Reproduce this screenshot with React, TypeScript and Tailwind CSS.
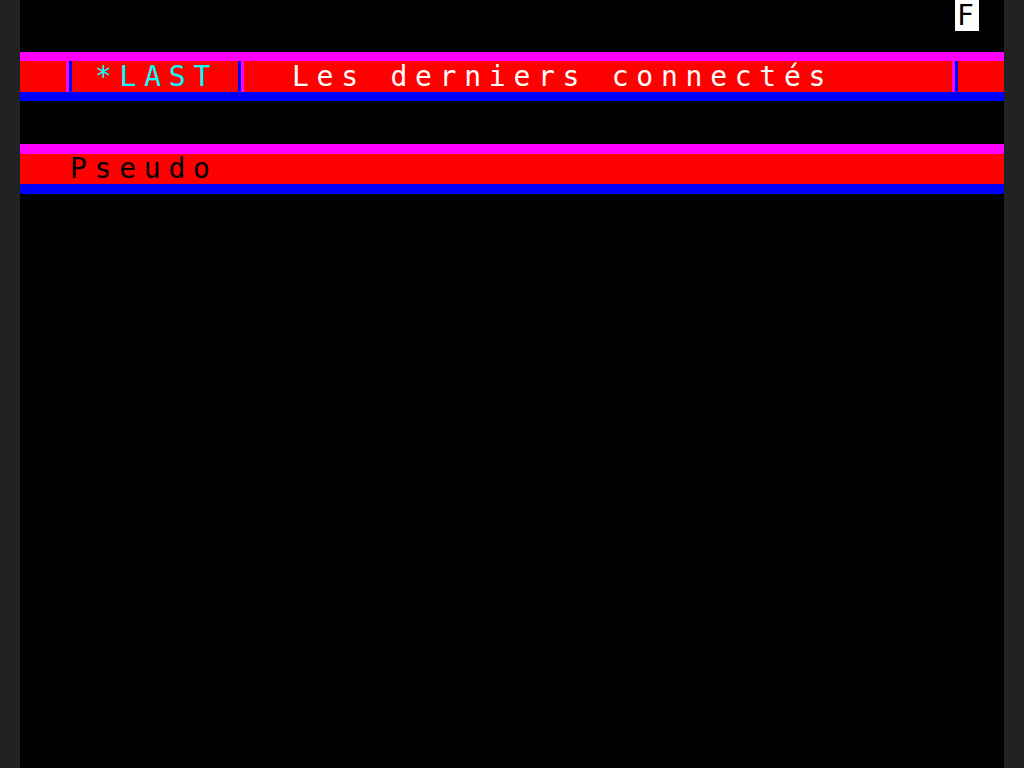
import React from "react";

const mono = { fontFamily: '"DejaVu Sans Mono", "Liberation Mono", monospace' };

export default function App() {
  return (
    <div className="flex h-[768px] w-[1024px] bg-[#222222] overflow-hidden">
      <div className="w-[20px] shrink-0" />
      <div className="flex w-[984px] flex-col bg-black" style={mono}>
        {/* row 0 */}
        <div className="flex h-[52px] items-start">
          <div className="ml-[935px] flex h-[31px] w-[24px] items-center bg-white pl-[2px] text-[28px] leading-none text-black">
            F
          </div>
        </div>
        {/* header band */}
        <div className="h-[9px] bg-[#ff00ff]" />
        <div className="flex h-[31px] items-stretch bg-[#ff0000] text-[28px] leading-[31px] tracking-[7.74px]">
          <div className="w-[46px] shrink-0" />
          <div className="w-[3px] shrink-0 bg-[#ff00ff]" />
          <div className="w-[3px] shrink-0 bg-[#0000ff]" />
          <div className="w-[166px] shrink-0 whitespace-pre pl-[23px] text-[#00ffff]">*LAST</div>
          <div className="w-[3px] shrink-0 bg-[#0000ff]" />
          <div className="w-[3px] shrink-0 bg-[#ff00ff]" />
          <div className="w-[708px] shrink-0 whitespace-pre pl-[48px] text-white">Les derniers connectés</div>
          <div className="w-[3px] shrink-0 bg-[#ff00ff]" />
          <div className="w-[3px] shrink-0 bg-[#0000ff]" />
          <div className="flex-1" />
        </div>
        <div className="h-[9px] bg-[#0000ff]" />
        <div className="h-[43px]" />
        {/* column header band */}
        <div className="h-[10px] bg-[#ff00ff]" />
        <div className="flex h-[30px] items-stretch bg-[#ff0000] text-[28px] leading-[30px] tracking-[7.74px] text-black">
          <div className="whitespace-pre pl-[50px]">Pseudo</div>
        </div>
        <div className="h-[10px] bg-[#0000ff]" />
        <div className="flex-1" />
      </div>
      <div className="w-[20px] shrink-0" />
    </div>
  );
}
